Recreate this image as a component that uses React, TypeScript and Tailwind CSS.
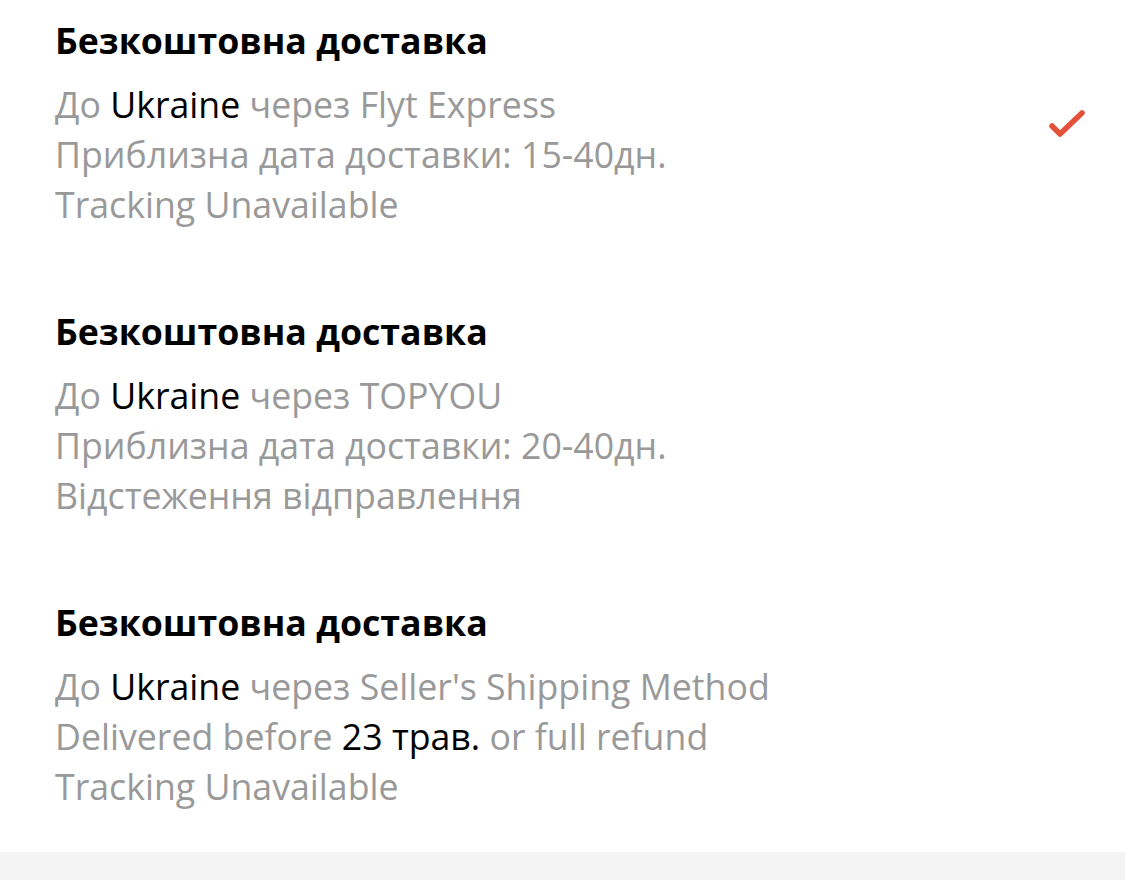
import React from "react";

type Item = { lines: React.ReactNode[]; checked?: boolean; last?: boolean };

const B = ({ children }: { children: React.ReactNode }) => (
  <span className="text-black">{children}</span>
);

const items: Item[] = [
  {
    checked: true,
    lines: [
      <>До <B>Ukraine</B> через Flyt Express</>,
      <>Приблизна дата доставки: 15-40дн.</>,
      <>Tracking Unavailable</>,
    ],
  },
  {
    lines: [
      <>До <B>Ukraine</B> через TOPYOU</>,
      <>Приблизна дата доставки: 20-40дн.</>,
      <>Відстеження відправлення</>,
    ],
  },
  {
    last: true,
    lines: [
      <>До <B>Ukraine</B> через Seller's Shipping Method</>,
      <>Delivered before <B>23 трав.</B> or full refund</>,
      <>Tracking Unavailable</>,
    ],
  },
];

export default function App() {
  return (
    <div
      className="w-[1125px] h-[880px] bg-white flex flex-col overflow-hidden"
      style={{ fontFamily: "'Open Sans', 'Noto Sans', sans-serif" }}
    >
      <div className="flex flex-col">
        {items.map((it, i) => (
          <div
            key={i}
            className={`flex flex-row pl-[55px] pr-[38px] pt-[15px] ${it.last ? "pb-[41px]" : "pb-[62px]"}`}
          >
            <div className="flex-1 flex flex-col">
              <div className="text-[35.7px] leading-[50px] font-bold text-black">
                Безкоштовна доставка
              </div>
              <div className="mt-[14px] flex flex-col text-[35.7px] leading-[50px] text-[#999999]">
                {it.lines.map((l, j) => (
                  <div key={j}>{l}</div>
                ))}
              </div>
            </div>
            {it.checked && (
              <div className="pt-[94px]">
                <svg width="40" height="32" viewBox="0 0 40 32">
                  <path
                    d="M5 17 L13 25 L35 4"
                    fill="none"
                    stroke="#e4513b"
                    strokeWidth="5.5"
                    strokeLinecap="round"
                    strokeLinejoin="round"
                  />
                </svg>
              </div>
            )}
          </div>
        ))}
      </div>
      <div className="flex-1 bg-[#f4f4f4]" />
    </div>
  );
}
